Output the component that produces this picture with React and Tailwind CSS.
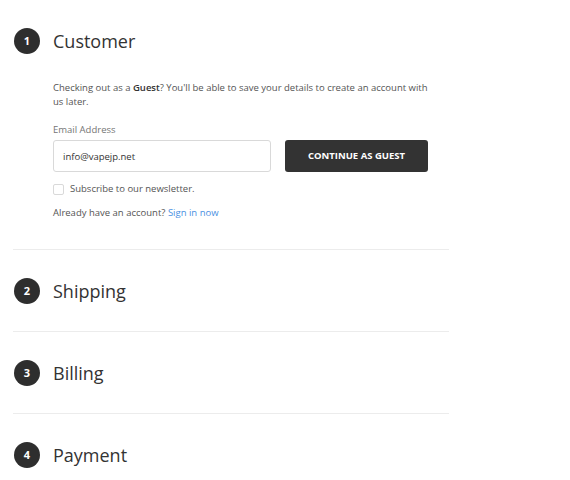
import React, { useState } from 'react'

const steps = ['Shipping', 'Billing', 'Payment']

function StepHeader({ num, title }) {
  return (
    <div className="flex items-center h-[26px]">
      <span className="w-[26px] h-[26px] rounded-full bg-[#2e2e2e] text-white text-[11px] font-bold flex items-center justify-center ml-px">
        {num}
      </span>
      <h2 className="ml-[13px] text-[18px] leading-none text-[#333]">{title}</h2>
    </div>
  )
}

export default function App() {
  const [email, setEmail] = useState('info@vapejp.net')
  const [subscribe, setSubscribe] = useState(false)

  return (
    <div className="bg-white min-h-[480px] pl-[13px] font-['Open_Sans',sans-serif] text-[#545454]">
      <div className="w-[436px]">
        {/* Customer step */}
        <section className="pt-[28px] pb-[29px] border-b border-[#ececec]">
          <StepHeader num={1} title="Customer" />
          <div className="pl-[40px] pt-[27px]">
            <p className="max-w-[378px] text-[9.5px] leading-[14px]">
              Checking out as a <strong className="font-semibold text-[#333]">Guest</strong>? You'll be able to save your details to create an account with us later.
            </p>
            <label className="block mt-[14px] text-[9.5px] leading-[14px] text-[#757575]">Email Address</label>
            <div className="flex gap-[14px] mt-[3px]">
              <input
                value={email}
                onChange={(e) => setEmail(e.target.value)}
                className="w-[218px] h-[32px] border border-[#d9d9d9] rounded-[3px] px-[9px] text-[9.5px] text-[#333] outline-none"
              />
              <button className="w-[143px] h-[32px] bg-[#333] rounded-[3px] text-white text-[9.5px] font-bold">
                CONTINUE AS GUEST
              </button>
            </div>
            <label className="flex items-center mt-[10px] text-[9.5px] leading-[14px] cursor-pointer">
              <input
                type="checkbox"
                checked={subscribe}
                onChange={() => setSubscribe(!subscribe)}
                className="appearance-none w-[11px] h-[11px] border border-[#d9d9d9] rounded-[2px] mr-[6px]"
              />
              Subscribe to our newsletter.
            </label>
            <p className="mt-[10px] text-[9.5px] leading-[14px]">
              Already have an account? <a href="#" className="text-[#4a90e2]">Sign in now</a>
            </p>
          </div>
        </section>

        {steps.map((title, i) => (
          <section key={title} className={`pt-[28px] pb-[27px] ${i < steps.length - 1 ? 'border-b border-[#ececec]' : ''}`}>
            <StepHeader num={i + 2} title={title} />
          </section>
        ))}
      </div>
    </div>
  )
}
